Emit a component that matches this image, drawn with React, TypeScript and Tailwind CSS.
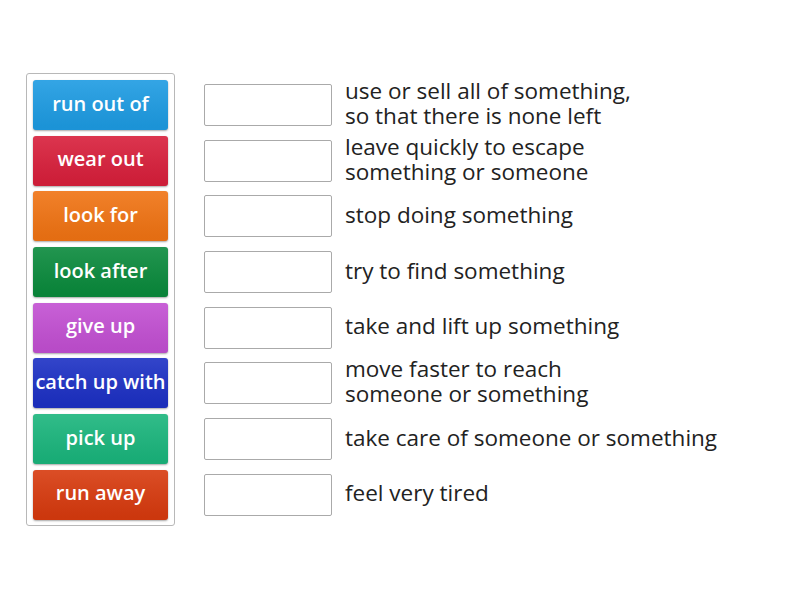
const pairs = [
  { word: "run out of", bg: "bg-[#1d9be2]", def: ["use or sell all of something,", "so that there is none left"] },
  { word: "wear out", bg: "bg-[#d81f3b]", def: ["leave quickly to escape", "something or someone"] },
  { word: "look for", bg: "bg-[#f07313]", def: ["stop doing something"] },
  { word: "look after", bg: "bg-[#0a8a3c]", def: ["try to find something"] },
  { word: "give up", bg: "bg-[#c24fd2]", def: ["take and lift up something"] },
  { word: "catch up with", bg: "bg-[#1c30c4]", def: ["move faster to reach", "someone or something"] },
  { word: "pick up", bg: "bg-[#1ab57c]", def: ["take care of someone or something"] },
  { word: "run away", bg: "bg-[#d73a0e]", def: ["feel very tired"] },
];

export default function App() {
  return (
    <div className="w-[800px] h-[600px] bg-white pt-[73px] pl-[26px] flex gap-[29px] font-['Open_Sans',sans-serif]">
      {/* word tiles */}
      <div className="self-start flex flex-col gap-[5.7px] border border-[#b8b8b8] rounded-[3px] px-[6px] pt-[6px] pb-[5px]">
        {pairs.map((p) => (
          <div
            key={p.word}
            className={`${p.bg} w-[135px] h-[50px] rounded-[3px] flex items-center justify-center pb-[3px] text-white text-[20px] font-semibold shadow-[0_1px_2px_rgba(0,0,0,0.35)] bg-gradient-to-b from-white/10 to-black/5 whitespace-nowrap`}
          >
            {p.word}
          </div>
        ))}
      </div>

      {/* answer slots + definitions */}
      <div className="flex flex-col gap-[5.7px] pt-[7px]">
        {pairs.map((p) => (
          <div key={p.word} className="h-[50px] flex items-center gap-[13px]">
            <div className="w-[128px] h-[42px] border border-[#aaaaaa] rounded-[2px] bg-white" />
            <div className="text-[22.5px] leading-[25px] text-[#222] pb-[4px] whitespace-nowrap">
              {p.def.map((line) => (
                <div key={line}>{line}</div>
              ))}
            </div>
          </div>
        ))}
      </div>
    </div>
  );
}
